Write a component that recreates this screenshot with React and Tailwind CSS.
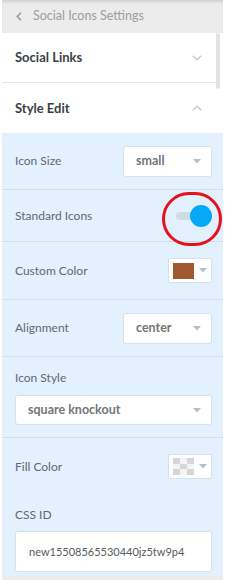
import React from "react";

const Caret = () => (
  <svg width="8" height="5" viewBox="0 0 8 5" className="shrink-0">
    <path d="M0 0 L8 0 L4 4.5 Z" fill="#b3c0cc" />
  </svg>
);

const Select = ({ value, className = "" }) => (
  <div
    className={`flex items-center justify-between bg-white border border-[#d6e1ea] rounded-[3px] pl-[12px] pr-[10px] ${className}`}
  >
    <span className="text-[12.5px] font-bold text-[#757575] leading-none">{value}</span>
    <Caret />
  </div>
);

const ColorBox = ({ children }) => (
  <div className="flex items-center justify-between w-[44px] h-[25px] bg-white border border-[#d6e1ea] rounded-[2px] pl-[4px] pr-[4px]">
    {children}
    <Caret />
  </div>
);

const Label = ({ children }) => (
  <span className="text-[12px] text-[#5d6975] leading-[14px]">{children}</span>
);

const Row = ({ h, children, border = true }) => (
  <div
    className={`flex items-center justify-between pl-[13px] pr-[11px] ${h} ${
      border ? "border-b border-[#cfdfee]" : ""
    }`}
  >
    {children}
  </div>
);

export default function App() {
  return (
    <div
      className="relative w-[226px] h-[580px] bg-white overflow-hidden"
      style={{ fontFamily: "Lato, 'Open Sans', sans-serif" }}
    >
      <div className="ml-[2px] w-[221px] h-[580px] flex flex-col">
        {/* header */}
        <div className="h-[33px] shrink-0 bg-[#ececec] shadow-[inset_0_3px_3px_-1px_rgba(0,0,0,0.12)] flex items-center pl-[14px]">
          <svg width="6" height="9" viewBox="0 0 6 9" className="mr-[11px]">
            <path d="M5 0.8 L1.3 4.5 L5 8.2" fill="none" stroke="#9a9a9a" strokeWidth="1.6" />
          </svg>
          <span className="text-[12.5px] text-[#9d9d9d] leading-none">Social Icons Settings</span>
        </div>

        {/* Social Links */}
        <div className="h-[50px] shrink-0 flex items-center justify-between pl-[13px] pr-[15px] border-b border-[#e6e6e6] mr-[6px]">
          <span className="text-[13px] font-bold text-[#3a3f44] leading-none">Social Links</span>
          <svg width="10" height="6" viewBox="0 0 10 6">
            <path d="M0.8 0.8 L5 4.8 L9.2 0.8" fill="none" stroke="#c9c9c9" strokeWidth="1.3" />
          </svg>
        </div>

        {/* Style Edit */}
        <div className="h-[50px] shrink-0 flex items-center justify-between pl-[13px] pr-[21px]">
          <span className="text-[13px] font-bold text-[#3a3f44] leading-none">Style Edit</span>
          <svg width="10" height="6" viewBox="0 0 10 6">
            <path d="M0.8 5.2 L5 1.2 L9.2 5.2" fill="none" stroke="#c9c9c9" strokeWidth="1.3" />
          </svg>
        </div>

        {/* blue area */}
        <div className="flex-1 bg-[#e3f0fd] flex flex-col">
          <Row h="h-[57px]">
            <Label>Icon Size</Label>
            <Select value="small" className="w-[89px] h-[31px]" />
          </Row>
          <Row h="h-[52px]">
            <Label>Standard Icons</Label>
            <div className="relative w-[36px] h-[22px] flex items-center">
              <div className="w-[26px] h-[8px] rounded-full bg-[#cfdbe6]" />
              <div className="absolute right-0 top-0 w-[22px] h-[22px] rounded-full bg-[#06a9f7]" />
            </div>
          </Row>
          <Row h="h-[58px]">
            <Label>Custom Color</Label>
            <ColorBox>
              <div className="w-[21px] h-[16px] bg-[#a0582f]" />
            </ColorBox>
          </Row>
          <Row h="h-[57px]">
            <Label>Alignment</Label>
            <Select value="center" className="w-[89px] h-[31px]" />
          </Row>
          <div className="h-[81px] border-b border-[#cfdfee] pl-[13px] pr-[11px] pt-[14px] flex flex-col gap-[10px]">
            <Label>Icon Style</Label>
            <Select value="square knockout" className="w-full h-[30px]" />
          </div>
          <Row h="h-[57px]" border={false}>
            <Label>Fill Color</Label>
            <ColorBox>
              <svg width="21" height="17" viewBox="0 0 21 17">
                <rect width="21" height="17" fill="#f4f4f4" />
                <rect x="0" y="0" width="7" height="6" fill="#d6d6d6" />
                <rect x="14" y="0" width="7" height="6" fill="#d6d6d6" />
                <rect x="7" y="6" width="7" height="5" fill="#d6d6d6" />
                <rect x="0" y="11" width="7" height="6" fill="#d6d6d6" />
                <rect x="14" y="11" width="7" height="6" fill="#d6d6d6" />
              </svg>
            </ColorBox>
          </Row>
          <div className="h-[82px] pl-[13px] pr-[11px] pt-[13px] flex flex-col gap-[9px]">
            <Label>CSS ID</Label>
            <div className="h-[41px] bg-white border border-[#d6e1ea] rounded-[3px] flex items-center pl-[13px]">
              <span className="text-[11px] text-[#555b61] leading-none">new15508565530440jz5tw9p4</span>
            </div>
          </div>
        </div>
        <div className="h-[3px] shrink-0 bg-[#ececec]" />
      </div>

      {/* scrollbar */}
      <div className="absolute left-[216px] top-[33px] w-[4px] h-[56px] rounded-full bg-[#e3e3e3]" />

      {/* red annotation circle */}
      <div className="absolute left-[162px] top-[192px] w-[60px] h-[54px] rounded-full border-[3px] border-[#e3121b]" />
    </div>
  );
}
